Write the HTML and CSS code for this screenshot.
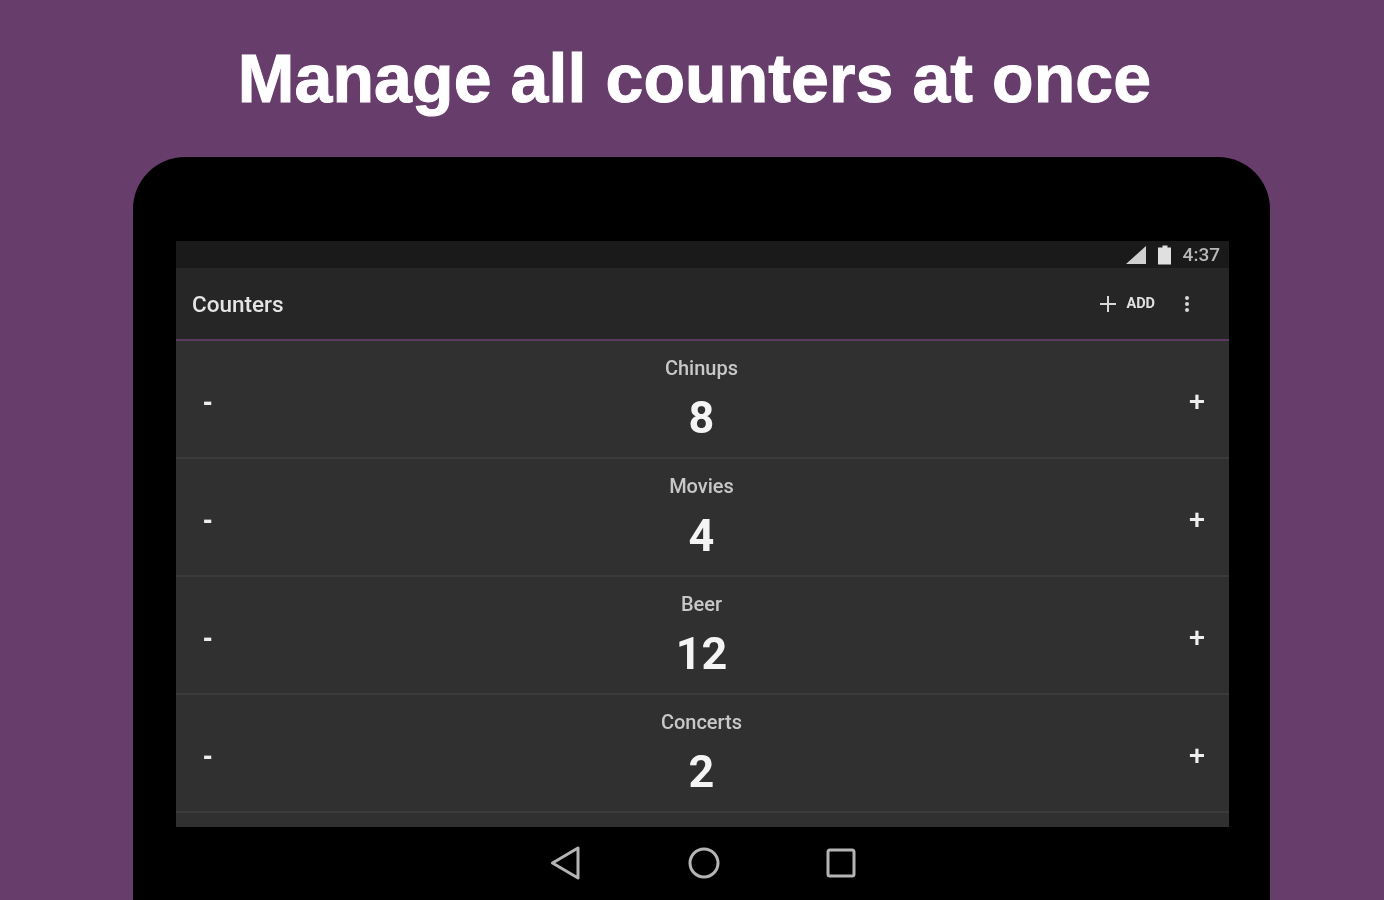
FILE: index.html
```html
<!DOCTYPE html>
<html lang="en">
<head>
    <meta charset="UTF-8">
    <meta name="viewport" content="width=device-width, initial-scale=1.0">
    <title>Counters</title>
    <link rel="stylesheet" href="styles.css">
</head>
<body>

<h1 class="headline">Manage all counters at once</h1>

<div class="tablet">
    <div class="screen">
        <div class="status-bar">
            <svg class="signal" width="22" height="20" viewBox="0 0 22 20"><path d="M21 1V19H1Z" fill="#d0d0d0"/></svg>
            <svg class="battery" width="14" height="20" viewBox="0 0 14 20"><path d="M4.500 0.500h5v2h3.500v17h-13v-17h4.500z" fill="#e0e0e0"/></svg>
            <span class="clock">4:37</span>
        </div>

        <header class="app-bar">
            <span class="app-title">Counters</span>
            <div class="actions">
                <svg class="add-icon" width="18" height="18" viewBox="0 0 18 18"><path d="M9 1V17M1 9H17" stroke="#d8d8d8" stroke-width="2" fill="none"/></svg>
                <span class="add-label">ADD</span>
                <svg class="more-icon" width="6" height="18" viewBox="0 0 6 18"><circle cx="3" cy="3" r="2"/><circle cx="3" cy="9" r="2"/><circle cx="3" cy="15" r="2"/></svg>
            </div>
        </header>

        <div class="counter">
            <span class="minus">-</span>
            <div class="counter-body">
                <span class="counter-name">Chinups</span>
                <span class="counter-value">8</span>
            </div>
            <span class="plus">+</span>
        </div>
        <div class="counter">
            <span class="minus">-</span>
            <div class="counter-body">
                <span class="counter-name">Movies</span>
                <span class="counter-value">4</span>
            </div>
            <span class="plus">+</span>
        </div>
        <div class="counter">
            <span class="minus">-</span>
            <div class="counter-body">
                <span class="counter-name">Beer</span>
                <span class="counter-value">12</span>
            </div>
            <span class="plus">+</span>
        </div>
        <div class="counter">
            <span class="minus">-</span>
            <div class="counter-body">
                <span class="counter-name">Concerts</span>
                <span class="counter-value">2</span>
            </div>
            <span class="plus">+</span>
        </div>
    </div>

    <div class="nav-bar">
        <svg width="32" height="36" viewBox="0 0 32 36"><path d="M2.500 18L28 3V33Z" fill="none" stroke="#b4b4b4" stroke-width="3" stroke-linejoin="round"/></svg>
        <svg width="32" height="32" viewBox="0 0 32 32"><circle cx="16" cy="16" r="14" fill="none" stroke="#b4b4b4" stroke-width="3"/></svg>
        <svg width="30" height="30" viewBox="0 0 30 30"><rect x="2" y="2" width="26" height="26" rx="2" fill="none" stroke="#b4b4b4" stroke-width="3"/></svg>
    </div>
</div>

</body>
</html>
```

FILE: styles.css
```css
html, body {
    height: 900px;
    overflow: hidden;
}

body {
    margin: 0;
    background-color: #673d6b;
    font-family: Roboto, "Liberation Sans", sans-serif;
    color: #fff;
    display: flex;
    flex-direction: column;
    align-items: center;
}

.headline {
    margin: 0 0 0 5px;
    height: 157px;
    padding-top: 39px;
    box-sizing: border-box;
    font-family: "Liberation Sans", Arial, sans-serif;
    font-size: 68px;
    line-height: 78px;
    font-weight: bold;
    letter-spacing: 0.1px;
    -webkit-text-stroke: 1px #fff;
    text-align: center;
    white-space: nowrap;
    filter: blur(0.5px);
}

.tablet {
    flex: none;
    width: 1137px;
    height: 743px;
    margin-left: 19px;
    padding: 84px 41px 0 43px;
    box-sizing: border-box;
    background-color: #000;
    border-radius: 52px 52px 0 0;
}

.screen {
    height: 586px;
    overflow: hidden;
    background-color: #303030;
    filter: blur(0.6px);
}

.status-bar {
    height: 27px;
    background-color: #1a1a1a;
    display: flex;
    align-items: center;
    justify-content: flex-end;
    gap: 9px;
    padding-right: 9px;
}

.battery {
    margin-left: 2px;
}

.clock {
    margin-left: 2px;
    font-size: 19px;
    font-weight: 500;
    color: #b8b8b8;
}

.app-bar {
    height: 71px;
    background-color: #262626;
    border-bottom: 2px solid #5a3a5f;
    display: flex;
    align-items: center;
    justify-content: space-between;
    padding: 0 39px 0 16px;
}

.app-title {
    font-size: 22.500px;
    font-weight: 500;
    color: #e4e4e4;
}

.actions {
    display: flex;
    align-items: center;
}

.add-label {
    font-size: 14.500px;
    font-weight: bold;
    color: #e0e0e0;
    margin: 0 29px 0 9px;
}

.more-icon {
    fill: #d8d8d8;
}

.counter {
    height: 117.900px;
    box-sizing: border-box;
    border-bottom: 2px solid #3b3b3b;
    display: flex;
    align-items: flex-start;
    justify-content: space-between;
    padding: 1px 24px 0 27px;
}

.minus, .plus {
    font-family: "Liberation Sans", Arial, sans-serif;
    font-weight: bold;
    color: #eee;
    font-size: 28px;
    line-height: 32px;
    margin-top: 44px;
}

.counter-body {
    display: flex;
    flex-direction: column;
    align-items: center;
    padding-top: 13px;
    margin-left: 2px;
}

.counter-name {
    font-size: 20px;
    font-weight: 500;
    line-height: 26px;
    color: #c8c8c8;
}

.counter-value {
    margin-top: 11px;
    font-size: 45px;
    line-height: 52px;
    font-weight: bold;
    color: #f4f4f4;
}

.nav-bar {
    display: flex;
    align-items: center;
    justify-content: center;
    gap: 106px;
    height: 72px;
    filter: blur(0.5px);
}
```
